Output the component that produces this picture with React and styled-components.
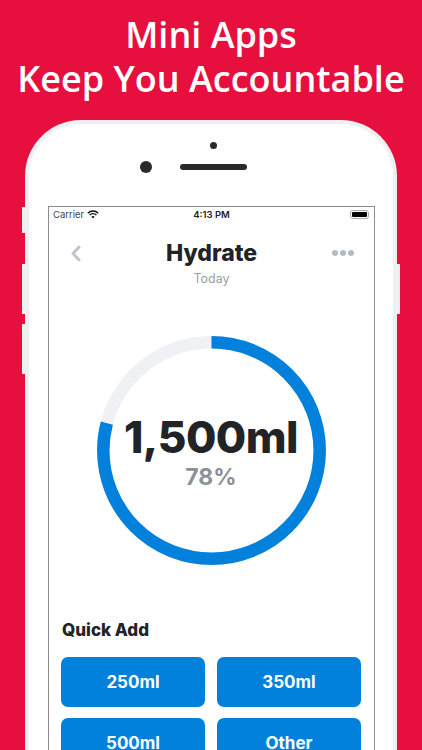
import React from 'react';
import styled, { createGlobalStyle } from 'styled-components';

const GlobalStyle = createGlobalStyle`
  html, body {
    margin: 0;
    padding: 0;
    background: #e60f3e;
  }
  * {
    box-sizing: border-box;
  }
`;

const Page = styled.div`
  width: 422px;
  height: 750px;
  overflow: hidden;
  background: #e60f3e;
  font-family: Inter, "Liberation Sans", sans-serif;
`;

const Headline = styled.h1`
  margin: 0;
  height: 120px;
  padding-top: 13px;
  color: #fff;
  font-family: "Open Sans", Lato, sans-serif;
  font-size: 36px;
  font-weight: 600;
  line-height: 44px;
  text-align: center;
`;

const Phone = styled.div`
  position: relative;
  width: 372px;
  height: 700px;
  margin-left: 25px;
  padding: 0 19px;
  background: #fff;
  border: 4px solid #eff0f2;
  border-bottom: 0;
  border-radius: 56px 56px 0 0;
`;

const SideButton = styled.span`
  position: absolute;
  top: ${(p) => p.$top}px;
  ${(p) => (p.$right ? 'right: -7px;' : 'left: -7px;')}
  width: 3px;
  height: ${(p) => p.$height}px;
  background: #eff0f2;
`;

const Earpiece = styled.div`
  position: relative;
  display: flex;
  align-items: center;
  justify-content: center;
  gap: 28px;
  height: 82px;
  padding: 4px 32px 0 0;
  margin-right: 3px;
`;

const Camera = styled.span`
  width: 12px;
  height: 12px;
  border-radius: 50%;
  background: #2a2a2c;
`;

const Speaker = styled.span`
  width: 67px;
  height: 6px;
  border-radius: 3px;
  background: #2a2a2c;
`;

const Sensor = styled.span`
  position: absolute;
  top: 18px;
  left: 50%;
  width: 7px;
  height: 7px;
  border-radius: 50%;
  background: #2a2a2c;
`;

const Screen = styled.div`
  width: 327px;
  height: 560px;
  background: #fff;
  border: 1px solid #8c8c8c;
  border-bottom: 0;
`;

const StatusBar = styled.div`
  display: grid;
  grid-template-columns: 1fr auto 1fr;
  align-items: center;
  height: 15px;
  padding: 0 4px;
  color: #222;
  font-size: 9.5px;
`;

const Carrier = styled.div`
  display: flex;
  align-items: center;
  gap: 3px;
  color: #444;
`;

const Clock = styled.div`
  font-weight: 600;
`;

const Battery = styled.div`
  justify-self: end;
  width: 19px;
  height: 9px;
  padding: 1px;
  border: 1px solid #a8a8a8;
  border-radius: 3px;
  margin-right: 1px;

  &::before {
    content: '';
    display: block;
    height: 100%;
    border-radius: 1px;
    background: #000;
  }
`;

const NavBar = styled.div`
  display: grid;
  grid-template-columns: 60px 1fr 60px;
  align-items: center;
  height: 44px;
  padding-top: 16px;
`;

const BackIcon = styled.svg`
  width: 10px;
  height: 17px;
  margin-left: 22px;
`;

const Title = styled.div`
  color: #222326;
  font-size: 23px;
  font-weight: 800;
  line-height: 30px;
  text-align: center;
`;

const Dots = styled.div`
  display: flex;
  gap: 2px;
  justify-content: flex-end;
  padding-right: 20px;
`;

const Dot = styled.span`
  width: 6px;
  height: 6px;
  border-radius: 50%;
  background: #b3bac6;
`;

const Subtitle = styled.div`
  margin-top: 5px;
  color: #9a9fa6;
  font-size: 12.5px;
  line-height: 16px;
  text-align: center;
`;

const RingWrap = styled.div`
  position: relative;
  width: 229px;
  height: 229px;
  margin: 49px 0 0 47.5px;
`;

const RingCenter = styled.div`
  position: absolute;
  inset: 0;
  display: flex;
  flex-direction: column;
  align-items: center;
  justify-content: center;
`;

const Amount = styled.div`
  color: #222326;
  font-size: 44px;
  font-weight: 800;
  line-height: 52px;
  letter-spacing: -0.5px;
`;

const Percent = styled.div`
  color: #8c9198;
  font-size: 23px;
  font-weight: 700;
  line-height: 28px;
`;

const SectionTitle = styled.h2`
  margin: 54px 0 0;
  padding-left: 13px;
  color: #222326;
  font-size: 17px;
  font-weight: 800;
  line-height: 22px;
`;

const QuickGrid = styled.div`
  display: grid;
  grid-template-columns: 144px 144px;
  gap: 11px 12px;
  margin-top: 16px;
  padding-left: 12px;
`;

const QuickButton = styled.button`
  height: 50px;
  padding: 0;
  border: 0;
  border-radius: 7px;
  background: #0281dc;
  color: #fff;
  font-family: inherit;
  font-size: 17px;
  font-weight: 700;
`;

const quickAmounts = ['250ml', '350ml', '500ml', 'Other'];
const progress = 0.79;
const radius = 108.2;
const circumference = 2 * Math.PI * radius;

const App = () => {
  return (
    <Page>
      <GlobalStyle />
      <Headline>
        Mini Apps
        <br />
        Keep You Accountable
      </Headline>
      <Phone>
        <SideButton $top={83} $height={26} />
        <SideButton $top={140} $height={50} />
        <SideButton $top={200} $height={50} />
        <SideButton $right $top={140} $height={50} />
        <Earpiece>
          <Sensor />
          <Camera />
          <Speaker />
        </Earpiece>
        <Screen>
          <StatusBar>
            <Carrier>
              Carrier
              <svg width="12" height="9" viewBox="0 0 12 9" fill="none" stroke="#111" strokeWidth="1.4">
                <path d="M.8 3.2a7.4 7.4 0 0 1 10.4 0" />
                <path d="M2.6 5a4.8 4.8 0 0 1 6.8 0" />
                <path d="M6 8.6 4.4 6.8a2.3 2.3 0 0 1 3.2 0Z" fill="#111" stroke="none" />
              </svg>
            </Carrier>
            <Clock>4:13 PM</Clock>
            <Battery />
          </StatusBar>
          <NavBar>
            <BackIcon viewBox="0 0 10 17" fill="none" stroke="#bcc2cc" strokeWidth="2.8">
              <path d="M8.8 1.2 2 8.5l6.8 7.3" />
            </BackIcon>
            <Title>Hydrate</Title>
            <Dots>
              <Dot />
              <Dot />
              <Dot />
            </Dots>
          </NavBar>
          <Subtitle>Today</Subtitle>
          <RingWrap>
            <svg width="229" height="229" viewBox="0 0 229 229" fill="none" strokeWidth="12.5">
              <circle cx="114.5" cy="114.5" r={radius} stroke="#eff1f5" />
              <circle
                cx="114.5"
                cy="114.5"
                r={radius}
                stroke="#0281dc"
                strokeDasharray={`${circumference * progress} ${circumference}`}
                transform="rotate(-90 114.5 114.5)"
              />
            </svg>
            <RingCenter>
              <Amount>1,500ml</Amount>
              <Percent>78%</Percent>
            </RingCenter>
          </RingWrap>
          <SectionTitle>Quick Add</SectionTitle>
          <QuickGrid>
            {quickAmounts.map((label) => (
              <QuickButton key={label}>{label}</QuickButton>
            ))}
          </QuickGrid>
        </Screen>
      </Phone>
    </Page>
  );
};

export default App;
